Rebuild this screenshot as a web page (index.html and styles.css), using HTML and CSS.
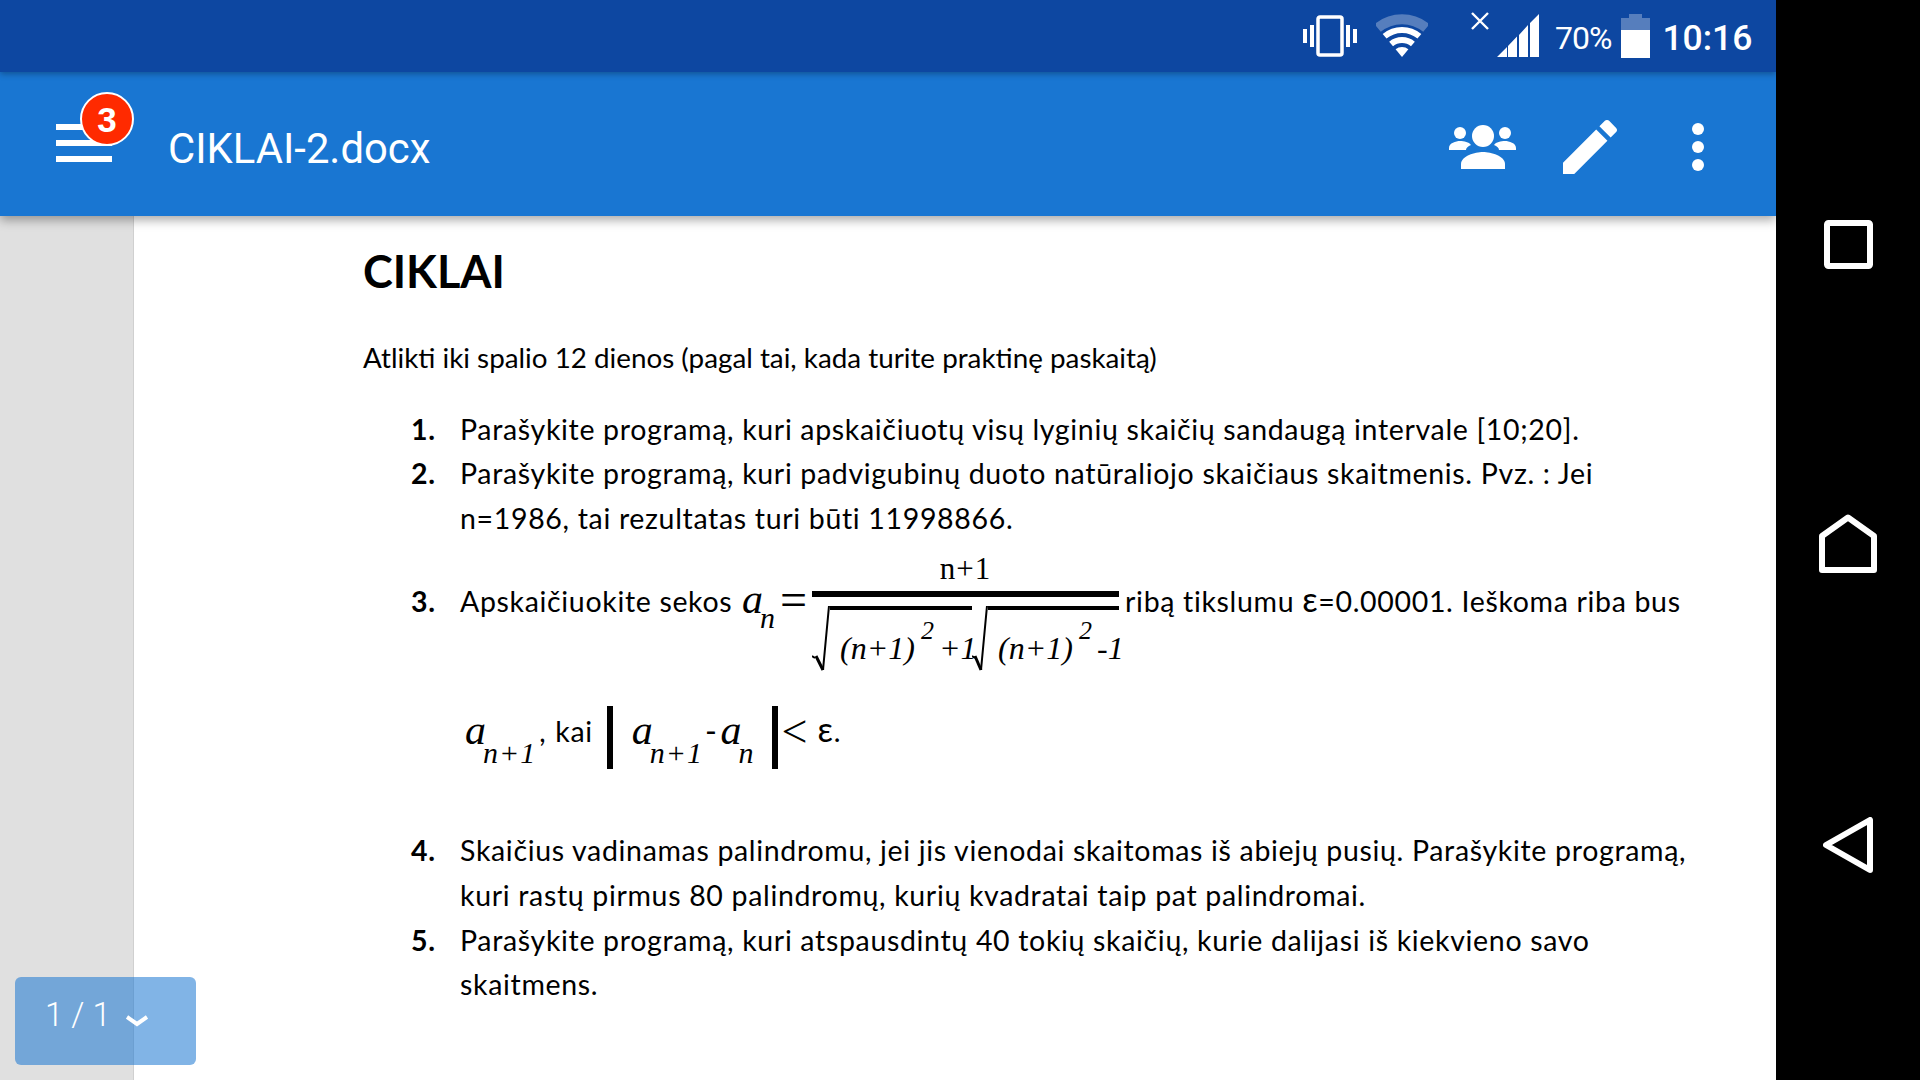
FILE: index.html
```html
<!DOCTYPE html>
<html>
<head>
    <title>CIKLAI-2.docx</title>
    <link rel="stylesheet" href="styles.css">
</head>
<body>
<div class="screen">
    <div class="phone">
        <div class="status-bar">
            <svg class="ico-vibrate" width="55" height="42" viewBox="0 0 55 42"><rect x="15" y="2" width="24" height="38" rx="2" fill="none" stroke="#fff" stroke-width="3.5"/><path fill="#fff" d="M0 14h4v14H0zM7 10h4v22H7zM43 10h4v22h-4zM50 14h4v14h-4z"/></svg>
            <svg class="ico-wifi" width="52" height="44" viewBox="0 0 52 44"><g fill="none" stroke="#fff"><path stroke-opacity=".3" stroke-width="10" d="M1.6 14A38 38 0 0 1 50.4 14"/><path stroke-width="6" d="M8.6 22.3A27 27 0 0 1 43.4 22.3"/><path stroke-width="6" d="M15.1 30A17 17 0 0 1 36.9 30"/></g><path fill="#fff" d="M26 43L19.6 35.3A10 10 0 0 1 32.4 35.3z"/></svg>
            <svg class="ico-x" width="18" height="18" viewBox="0 0 18 18"><path stroke="#fff" stroke-width="2.4" d="M1 1l16 16M17 1L1 17"/></svg>
            <svg class="ico-signal" width="42" height="43" viewBox="0 0 42 43"><path fill="#fff" d="M0 43L10 33V43zM11 43V32L20 22.500V43zM22 43V21L31 11V43zM33 43V9L42 0V43z"/></svg>
            <span class="battery-text">70%</span>
            <svg class="ico-battery" width="29" height="44" viewBox="0 0 29 44"><path fill="#fff" fill-opacity=".3" d="M8 0h13v4h8v12H0V4h8z"/><path fill="#fff" d="M0 16h29v28H0z"/></svg>
            <span class="clock">10:16</span>
        </div>
        <div class="app-bar">
            <div class="menu-btn">
                <span class="menu-line"></span>
                <span class="menu-line"></span>
                <span class="menu-line"></span>
                <span class="badge">3</span>
            </div>
            <div class="doc-title">CIKLAI-2.docx</div>
            <div class="actions">
                <svg width="67" height="44" viewBox="0 0 67 44"><g fill="#fff"><circle cx="34" cy="11" r="11"/><path d="M12 44v-5c0-8 14-12 22-12s22 4 22 12v5z"/><circle cx="11" cy="8" r="6"/><circle cx="56" cy="8" r="6"/><path d="M0 25v-2c0-5 7-7 11-7 4 0 9 1 11 4-3 1-5 3-5 5z"/><path d="M67 25v-2c0-5-7-7-11-7-4 0-9 1-11 4 3 1 5 3 5 5z"/></g></svg>
                <svg class="ico-pencil" width="54" height="54" viewBox="3 3 18 18"><path fill="#fff" d="M3 17.25V21h3.750L17.810 9.940l-3.750-3.750L3 17.250zM20.710 7.040c.39-.39.39-1.020 0-1.410l-2.340-2.340c-.39-.39-1.020-.39-1.410 0l-1.830 1.830 3.750 3.750 1.830-1.830z"/></svg>
                <svg class="ico-more" width="12" height="48" viewBox="0 0 12 48"><g fill="#fff"><circle cx="6" cy="6" r="6"/><circle cx="6" cy="24" r="6"/><circle cx="6" cy="42" r="6"/></g></svg>
            </div>
        </div>
        <div class="viewer">
            <div class="gutter"></div>
            <div class="page">
                <h1>CIKLAI</h1>
                <p class="intro">Atlikti iki spalio 12 dienos (pagal tai, kada turite praktinę paskaitą)</p>
                <ol class="tasks">
                    <li><div>Parašykite programą, kuri apskaičiuotų visų lyginių skaičių sandaugą intervale [10;20].</div></li>
                    <li><div>Parašykite programą, kuri padvigubinų duoto natūraliojo skaičiaus skaitmenis. Pvz. : Jei n=1986, tai rezultatas turi būti 11998866.</div></li>
                    <li class="task-formula">
                        <div>
                            <div class="formula-line">
                                <span class="formula-lead">Apskaičiuokite sekos</span>
                                <span class="math-a first-a">a</span><span class="math-sub">n</span>
                                <span class="equals">=</span>
                                <div class="fraction">
                                    <div class="numerator">n+1</div>
                                    <div class="fraction-bar"></div>
                                    <div class="denominator">
                                        <svg class="radical" width="18" height="65" viewBox="0 0 18 65"><path fill="none" stroke="#000" stroke-width="2" d="M0 50l3 2M17 0L11 64"/><path fill="none" stroke="#000" stroke-width="3" d="M4 50l7 14"/></svg>
                                        <div class="radicand first">(n+1)<sup>2</sup><span class="tail">+1</span></div>
                                        <svg class="radical" width="16" height="65" viewBox="2 0 16 65"><path fill="none" stroke="#000" stroke-width="2" d="M2 50l3 2M17 0L11 64"/><path fill="none" stroke="#000" stroke-width="3" d="M5 50l6 14"/></svg>
                                        <div class="radicand second">(n+1)<sup>2</sup><span class="tail">-1</span></div>
                                    </div>
                                </div>
                                <span class="after-fraction">ribą tikslumu <span class="eps">ε</span>=0.00001. Ieškoma riba bus</span>
                            </div>
                            <div class="limit-line">
                                <span class="math-a">a</span><span class="math-sub">n+1</span><span class="comma">,</span>
                                <span class="kai">kai</span>
                                <span class="abs-bar left"></span>
                                <span class="math-a">a</span><span class="math-sub">n+1</span><span class="minus">-</span><span class="math-a">a</span><span class="math-sub">n</span>
                                <span class="abs-bar right"></span>
                                <span class="less">&lt;</span>
                                <span class="epsilon"><span class="eps">ε</span>.</span>
                            </div>
                        </div>
                    </li>
                    <li><div>Skaičius vadinamas palindromu, jei jis vienodai skaitomas iš abiejų pusių. Parašykite programą, kuri rastų pirmus 80 palindromų, kurių kvadratai taip pat palindromai.</div></li>
                    <li><div>Parašykite programą, kuri atspausdintų 40 tokių skaičių, kurie dalijasi iš kiekvieno savo skaitmens.</div></li>
                </ol>
            </div>
            <div class="page-pill">
                <span>1 / 1</span>
                <svg width="22" height="12" viewBox="0 0 22 12"><path fill="none" stroke="#fff" stroke-width="4" d="M1 2l10 7 10-7"/></svg>
            </div>
        </div>
    </div>
    <div class="nav-bar">
        <svg class="nav-square" width="49" height="49" viewBox="0 0 49 49"><rect x="3" y="3" width="43" height="43" rx="1.500" fill="none" stroke="#fff" stroke-width="6" stroke-linejoin="round"/></svg>
        <svg class="nav-home" width="58" height="59" viewBox="0 0 58 59"><path fill="none" stroke="#fff" stroke-width="6" stroke-linejoin="round" d="M3 56V22L29 3.500 55 22V56z"/></svg>
        <svg class="nav-back" width="50" height="56" viewBox="0 0 50 56"><path fill="none" stroke="#fff" stroke-width="6" stroke-linejoin="round" d="M47 3V53L3 28z"/></svg>
    </div>
</div>
</body>
</html>
```

FILE: styles.css
```css
* {
    box-sizing: border-box;
}
html, body {
    margin: 0;
    padding: 0;
    background: #000;
    overflow: hidden;
}
.screen {
    display: flex;
    width: 1920px;
    height: 1080px;
}
.phone {
    width: 1776px;
    display: flex;
    flex-direction: column;
}

/* status bar */
.status-bar {
    height: 72px;
    flex: none;
    background: #0d47a1;
    display: flex;
    align-items: flex-start;
    color: #fff;
    font-family: Roboto, sans-serif;
    padding-left: 1303px;
    box-shadow: 0 2px 6px rgba(0, 0, 0, .3);
    position: relative;
    z-index: 3;
}
.ico-vibrate { margin-top: 15px; }
.ico-wifi { margin: 14px 0 0 18px; }
.ico-x { margin: 12px 0 0 43px; }
.ico-signal { margin: 14px 0 0 8px; }
.battery-text {
    font-size: 32px;
    line-height: 72px;
    margin: 2px 0 0 16px;
    letter-spacing: -1px;
}
.ico-battery { margin: 14px 0 0 10px; }
.clock {
    font-size: 35.500px;
    font-weight: 500;
    line-height: 72px;
    margin: 2px 0 0 12px;
}

/* app bar */
.app-bar {
    height: 144px;
    flex: none;
    background: #1976d2;
    display: flex;
    align-items: center;
    color: #fff;
    font-family: Roboto, sans-serif;
    padding-left: 56px;
    box-shadow: 0 4px 10px rgba(0, 0, 0, .35);
    position: relative;
    z-index: 2;
}
.menu-btn {
    width: 56px;
    margin-top: -2px;
    display: flex;
    flex-direction: column;
    gap: 10px;
    position: relative;
}
.menu-line {
    height: 6px;
    background: #fff;
}
.badge {
    position: absolute;
    left: 24px;
    top: -32px;
    width: 54px;
    height: 54px;
    border-radius: 50%;
    border: 2px solid #fff;
    background: #ff2a00;
    font-family: "Liberation Sans", sans-serif;
    font-weight: bold;
    font-size: 35px;
    line-height: 51px;
    text-align: center;
}
.doc-title {
    margin-left: 56px;
    margin-top: 8px;
    font-size: 41.800px;
    font-weight: 400;
}
.actions {
    margin-left: auto;
    margin-right: 72px;
    margin-top: 5px;
    display: flex;
    align-items: center;
}
.ico-pencil { margin-left: 47px; }
.ico-more { margin-left: 75px; }

/* document */
.viewer {
    flex: 1;
    display: flex;
    position: relative;
    overflow: hidden;
    background: #fff;
}
.gutter {
    width: 134px;
    flex: none;
    background: #e0e0e0;
    border-right: 1px solid #d0d0d0;
}
.page {
    flex: 1;
    padding: 28px 0 0 229px;
    color: #000;
    font-family: Lato, "Open Sans", sans-serif;
    font-size: 27.800px;
    line-height: 44.600px;
}
h1 {
    margin: 0;
    font-size: 45px;
    line-height: 54px;
    font-weight: bold;
}
.intro {
    margin: 38px 0 0;
}
.tasks {
    list-style: none;
    counter-reset: task;
    margin: 26px 0 0;
    padding: 0 0 0 48px;
    width: 1337px;
    font-size: 28.500px;
    letter-spacing: .67px;
}
.tasks li {
    display: flex;
    counter-increment: task;
}
.tasks li::before {
    content: counter(task) ".";
    flex: none;
    width: 49px;
    font-weight: bold;
}
.task-formula::before {
    margin-top: 39px;
}

/* formula */
.formula-line {
    display: flex;
    align-items: flex-start;
    height: 158px;
    padding-top: 2px;
    white-space: nowrap;
}
.formula-lead {
    width: 267px;
    flex: none;
    margin-top: 37px;
}
.math-a, .math-sub, .radicand, .numerator, .equals, .less {
    font-family: "Liberation Serif", serif;
    letter-spacing: 0;
}
.math-a {
    font-style: italic;
    font-size: 42px;
    line-height: 44px;
}
.math-sub {
    font-style: italic;
    font-size: 30px;
    line-height: 30px;
    letter-spacing: 1px;
    margin-left: -3px;
}
.first-a {
    margin: 35px 0 0 15px;
}
.formula-line .math-sub {
    margin-top: 61px;
}
.equals {
    font-size: 48px;
    line-height: 44px;
    margin: 36px 0 0 4px;
}
.fraction {
    width: 307px;
    margin-left: 5px;
    flex: none;
}
.numerator {
    text-align: center;
    font-size: 31px;
    line-height: 34px;
    height: 39px;
    margin-top: 10px;
    letter-spacing: 1px;
}
.fraction-bar {
    height: 6px;
    background: #000;
}
.denominator {
    display: flex;
    margin-top: 9px;
}
.radical {
    flex: none;
}
.radicand {
    border-top: 4px solid #000;
    height: 54px;
    font-style: italic;
    font-size: 32px;
    line-height: 76px;
    padding-left: 10px;
    white-space: nowrap;
    flex: none;
}
.radicand.first {
    width: 142px;
}
.radicand.second {
    width: 131px;
}
.radicand sup {
    font-size: 26px;
    line-height: 0;
    vertical-align: 20px;
    margin-left: 6px;
}
.tail {
    margin-left: 5px;
}
.after-fraction {
    margin: 37px 0 0 6px;
}
.eps {
    font-size: 34px;
    line-height: 0;
}
.limit-line {
    display: flex;
    align-items: flex-start;
    height: 130px;
    white-space: nowrap;
    padding: 8px 0 0 5px;
}
.limit-line .math-a {
    margin-top: 2px;
}
.limit-line .math-sub {
    margin-top: 32px;
}
.comma {
    margin: 3px 0 0 3px;
    font-size: 28px;
}
.kai {
    margin: 3px 0 0 9px;
}
.abs-bar {
    width: 6px;
    height: 63px;
    background: #000;
}
.abs-bar.left {
    margin: 0 19px 0 14px;
}
.abs-bar.right {
    margin: 0 4px 0 17px;
}
.minus {
    margin: 3px 3px 0 2px;
    font-size: 32px;
}
.less {
    font-size: 46px;
    line-height: 44px;
    margin-top: 4px;
}
.epsilon {
    margin: 3px 0 0 10px;
}

/* page indicator */
.page-pill {
    position: absolute;
    left: 15px;
    bottom: 15px;
    width: 181px;
    height: 88px;
    border-radius: 6px;
    background: rgba(25, 118, 210, .55);
    color: #fff;
    font-family: Roboto, sans-serif;
    font-weight: 300;
    font-size: 33px;
    display: flex;
    align-items: flex-start;
    padding: 18px 0 0 30px;
}
.page-pill svg {
    margin: 20px 0 0 15px;
}

/* nav bar */
.nav-bar {
    width: 144px;
    position: relative;
    background: #000;
}
.nav-bar svg {
    position: absolute;
}
.nav-square { left: 48px; top: 220px; }
.nav-home { left: 43px; top: 514px; }
.nav-back { left: 47px; top: 817px; }
```
